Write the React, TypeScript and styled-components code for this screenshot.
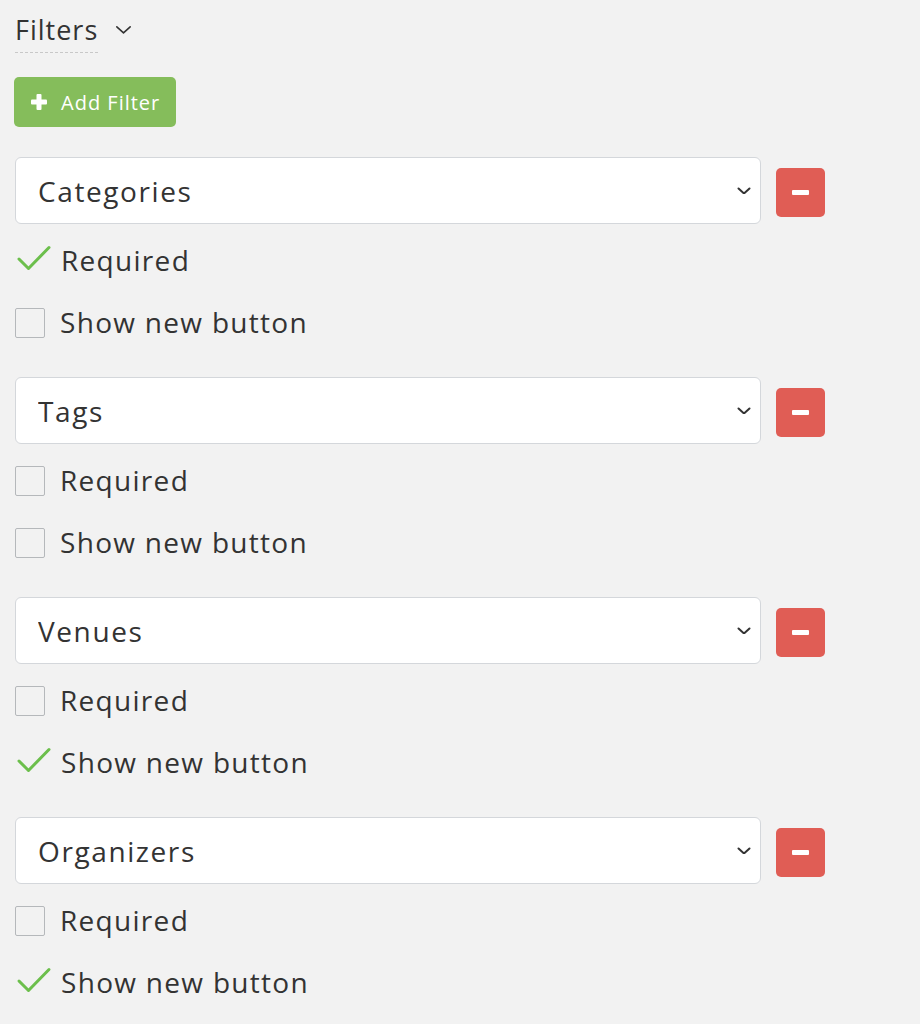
import styled, { createGlobalStyle } from 'styled-components';

const GlobalStyle = createGlobalStyle`
  html, body {
    margin: 0;
    padding: 0;
    background: #f2f2f2;
  }
  body {
    font-family: 'Open Sans', 'Liberation Sans', sans-serif;
    color: #333;
  }
`;

type Filter = {
  id: number;
  name: string;
  required: boolean;
  showNew: boolean;
};

const filters: Filter[] = [
  { id: 1, name: 'Categories', required: true, showNew: false },
  { id: 2, name: 'Tags', required: false, showNew: false },
  { id: 3, name: 'Venues', required: false, showNew: true },
  { id: 4, name: 'Organizers', required: false, showNew: true },
];

const Chevron = ({ width = 14, stroke = 2 }: { width?: number; stroke?: number }) => (
  <svg width={width} height={width * 0.57} viewBox="0 0 14 8" fill="none">
    <path
      d="M1.5 1.5L7 6.5L12.5 1.5"
      stroke="#333"
      strokeWidth={stroke}
      strokeLinecap="round"
      strokeLinejoin="round"
      vectorEffect="non-scaling-stroke"
    />
  </svg>
);

const CheckMark = () => (
  <svg width="34" height="26" viewBox="0 0 34 26" fill="none">
    <path d="M2 14L11.5 23.5L32 2.5" stroke="#6cbf4c" strokeWidth="3" strokeLinecap="round" strokeLinejoin="round" />
  </svg>
);

const Option = ({ checked, label }: { checked: boolean; label: string }) => (
  <OptionRow>
    {checked ? (
      <Mark>
        <CheckMark />
      </Mark>
    ) : (
      <Box />
    )}
    <OptionLabel>{label}</OptionLabel>
  </OptionRow>
);

const App = () => {
  return (
    <Wrapper>
      <GlobalStyle />
      <Header>
        <Title>Filters</Title>
        <HeaderToggle>
          <Chevron width={17} stroke={1.6} />
        </HeaderToggle>
      </Header>
      <AddButton>
        <svg width="16" height="16" viewBox="0 0 16 16">
          <rect x="5.5" y="0" width="5" height="16" rx="1" fill="#fff" />
          <rect x="0" y="5.5" width="16" height="5" rx="1" fill="#fff" />
        </svg>
        Add Filter
      </AddButton>
      <List>
        {filters.map((filter) => (
          <Block key={filter.id}>
            <SelectRow>
              <SelectBox>
                <Select defaultValue={filter.name}>
                  <option>{filter.name}</option>
                </Select>
                <SelectArrow>
                  <Chevron />
                </SelectArrow>
              </SelectBox>
              <RemoveButton aria-label="Remove filter">
                <span />
              </RemoveButton>
            </SelectRow>
            <Option checked={filter.required} label="Required" />
            <Option checked={filter.showNew} label="Show new button" />
          </Block>
        ))}
      </List>
    </Wrapper>
  );
};

const Wrapper = styled.div`
  padding: 13px 0 0 15px;
  width: 830px;
`;

const Header = styled.div`
  display: flex;
  align-items: center;
  gap: 17px;
`;

const Title = styled.span`
  font-size: 27px;
  line-height: 34px;
  letter-spacing: 1px;
  border-bottom: 1.5px dashed #c8c8c8;
  padding-bottom: 5px;
`;

const HeaderToggle = styled.span`
  display: flex;
  align-items: center;
  margin-top: -6px;
`;

const AddButton = styled.button`
  margin-top: 24px;
  display: flex;
  align-items: center;
  gap: 14px;
  height: 50px;
  padding: 0 16px 0 17px;
  margin-left: -1px;
  border: none;
  border-radius: 5px;
  background: #85bd5b;
  color: #fff;
  font-family: inherit;
  font-size: 20px;
  letter-spacing: 1px;
  cursor: pointer;
`;

const List = styled.div`
  margin-top: 30px;
  display: flex;
  flex-direction: column;
  gap: 39px;
`;

const Block = styled.div`
  display: flex;
  flex-direction: column;
`;

const SelectRow = styled.div`
  display: flex;
  align-items: center;
  gap: 15px;
`;

const SelectBox = styled.div`
  position: relative;
  width: 746px;
`;

const Select = styled.select`
  appearance: none;
  width: 100%;
  height: 67px;
  padding: 0 50px 0 22px;
  border: 1.5px solid #d4d7db;
  border-radius: 6px;
  background: #fff;
  color: #333;
  font-family: inherit;
  font-size: 28px;
  letter-spacing: 1.6px;
  outline: none;
`;

const SelectArrow = styled.span`
  position: absolute;
  right: 10px;
  top: 50%;
  transform: translateY(-50%);
  display: flex;
  pointer-events: none;
`;

const RemoveButton = styled.button`
  width: 49px;
  height: 49px;
  margin-top: 3px;
  border: none;
  border-radius: 5px;
  background: #e05d55;
  display: grid;
  place-items: center;
  padding: 0;
  cursor: pointer;
  span {
    width: 17px;
    height: 5px;
    border-radius: 1px;
    background: #fff;
  }
`;

const OptionRow = styled.label`
  display: flex;
  align-items: center;
  gap: 15px;
  height: 31px;
  margin-top: 31px;
  &:nth-child(2) {
    margin-top: 21px;
  }
`;

const Box = styled.span`
  width: 28px;
  height: 28px;
  border: 1.5px solid #b5b8bb;
  border-radius: 2px;
  background: transparent;
  flex-shrink: 0;
`;

const Mark = styled.span`
  width: 31px;
  height: 31px;
  display: flex;
  align-items: center;
  margin-left: 2px;
  margin-right: -2px;
  flex-shrink: 0;
  svg {
    overflow: visible;
    margin-top: -6px;
  }
`;

const OptionLabel = styled.span`
  font-size: 28px;
  line-height: 31px;
  letter-spacing: 1.3px;
`;

export default App;
